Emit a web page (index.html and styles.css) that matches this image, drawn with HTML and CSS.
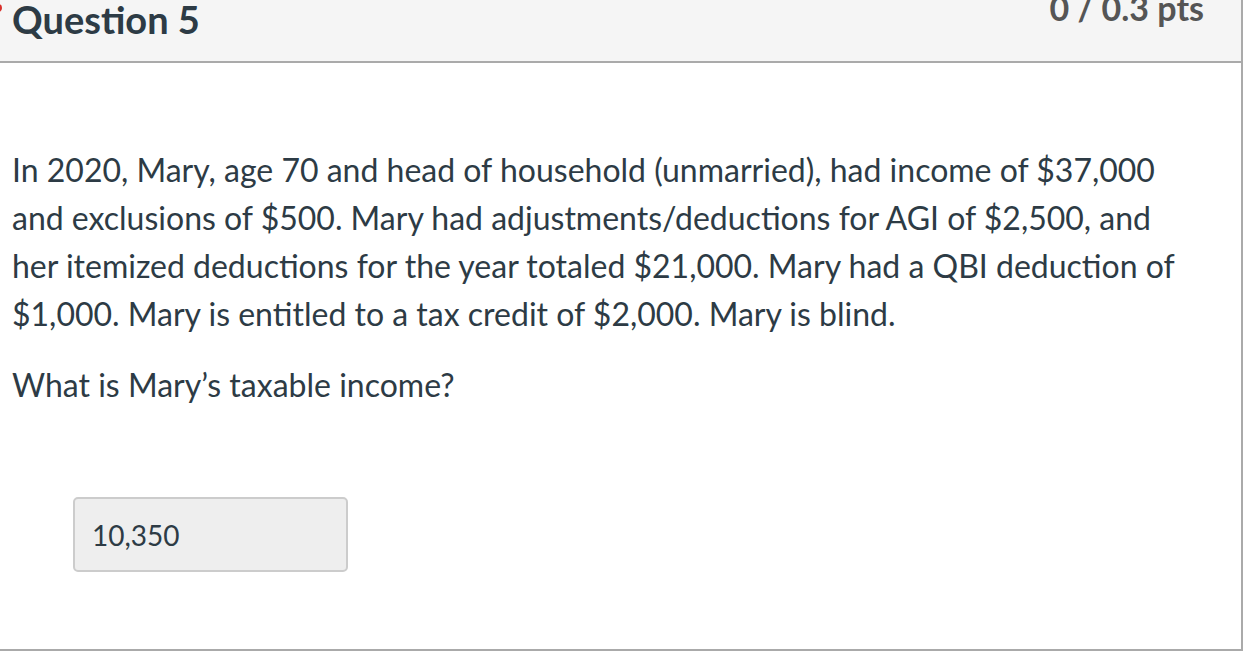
FILE: index.html
```html
<!DOCTYPE html>
<html lang="en">
<head>
<meta charset="utf-8">
<title>Question 5</title>
<link rel="stylesheet" href="styles.css">
</head>
<body>
<div class="question">
  <span class="marker" aria-hidden="true"></span>
  <div class="header">
    <h2 class="name">Question 5</h2>
    <span class="points">0 / 0.3 pts</span>
  </div>
  <div class="content">
    <p class="text">In 2020, Mary, age 70 and head of household (unmarried), had income of $37,000 and exclusions of $500. Mary had adjustments/deductions for AGI of $2,500, and her itemized deductions for the year totaled $21,000. Mary had a QBI deduction of $1,000. Mary is entitled to a tax credit of $2,000. Mary is blind.</p>
    <p class="text">What is Mary’s taxable income?</p>
    <div class="answer">
      <div class="answer-box">10,350</div>
    </div>
  </div>
</div>
</body>
</html>
```

FILE: styles.css
```css
html, body {
  margin: 0;
  padding: 0;
  background: #fff;
}

body {
  font-family: Lato, "Open Sans", "Liberation Sans", sans-serif;
  color: #2d3b45;
  overflow: hidden;
}

.question {
  position: relative;
  width: 1245px;
  margin-left: -2px;
  border-right: 2px solid #aaaaaa;
  border-bottom: 2px solid #aaaaaa;
  box-sizing: border-box;
}

.marker {
  position: absolute;
  left: -4px;
  top: 4px;
  width: 8px;
  height: 8px;
  border-radius: 50%;
  background: #d9302b;
}

.header {
  display: flex;
  justify-content: space-between;
  align-items: flex-start;
  height: 61px;
  background: #f5f5f5;
  border-bottom: 2px solid #aaaaaa;
  padding: 0 37px 0 14px;
}

.name {
  margin: 0;
  font-size: 38px;
  font-weight: 700;
  line-height: 38px;
  color: #2d3b45;
}

.points {
  margin-top: -17px;
  font-size: 34px;
  font-weight: 700;
  line-height: 50px;
  color: #555555;
}

.content {
  padding: 83px 50px 77px 14px;
}

.text {
  margin: 0 0 23px 0;
  font-size: 32px;
  line-height: 48px;
}

.answer {
  padding: 65px 0 0 61px;
}

.answer-box {
  width: 275px;
  height: 75px;
  box-sizing: border-box;
  display: flex;
  align-items: center;
  padding-left: 17px;
  background: #eeeeee;
  border: 2px solid #cccccc;
  border-radius: 5px;
  font-size: 28px;
}
```
